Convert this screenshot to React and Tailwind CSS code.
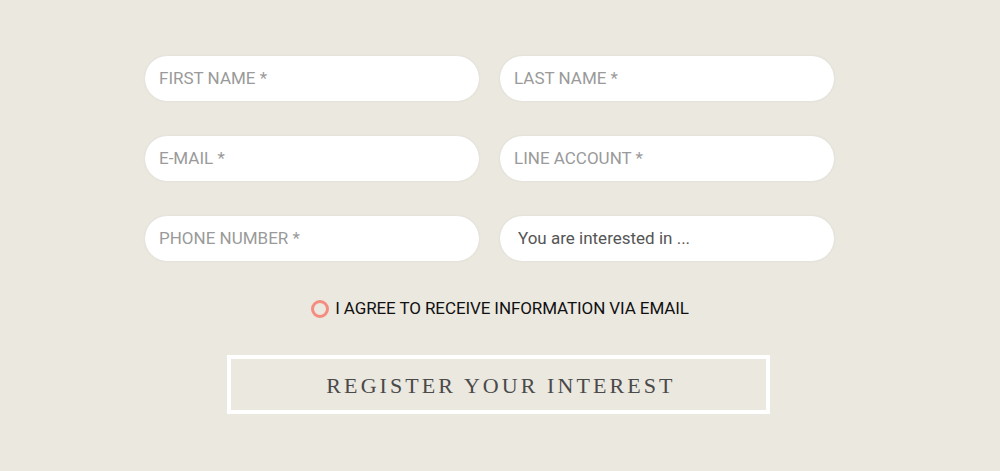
export default function App() {
  const fields = [
    ['FIRST NAME *', 'LAST NAME *'],
    ['E-MAIL *', 'LINE ACCOUNT *'],
    ['PHONE NUMBER *', null],
  ]

  return (
    <div className="w-[1000px] h-[471px] bg-[#ebe8e0] font-['Roboto',sans-serif] flex flex-col items-center pt-[55px]">
      <div className="grid grid-cols-[336px_336px] gap-x-[19px] gap-y-[33px] mr-[21px]">
        {fields.flat().map((label, i) =>
          label ? (
            <div
              key={i}
              className="h-[47px] rounded-[24px] bg-white border border-[#e6e3dc] shadow-[0_0_2px_rgba(0,0,0,0.04)] flex items-center pl-[14px] text-[17px] text-[#9a9a9a]"
            >
              {label}
            </div>
          ) : (
            <div
              key={i}
              className="h-[47px] rounded-[24px] bg-white border border-[#e6e3dc] shadow-[0_0_2px_rgba(0,0,0,0.04)] flex items-center pl-[18px] text-[17px] text-[#555555]"
            >
              You are interested in ...
            </div>
          )
        )}
      </div>

      <div className="flex items-center mt-[34px]">
        <span className="w-[18px] h-[18px] rounded-full border-[3px] border-[#f58c80] mr-[6px]" />
        <span className="text-[17px] tracking-[-0.1px] text-[#111111]">I AGREE TO RECEIVE INFORMATION VIA EMAIL</span>
      </div>

      <button className="mt-[33px] mr-[4px] w-[543px] h-[59px] border-4 border-white flex items-center justify-center pt-[3px] font-['Liberation_Serif',serif] text-[22px] tracking-[0.14em] text-[#4a4a4a] pl-[6px]">
        REGISTER YOUR INTEREST
      </button>
    </div>
  )
}
